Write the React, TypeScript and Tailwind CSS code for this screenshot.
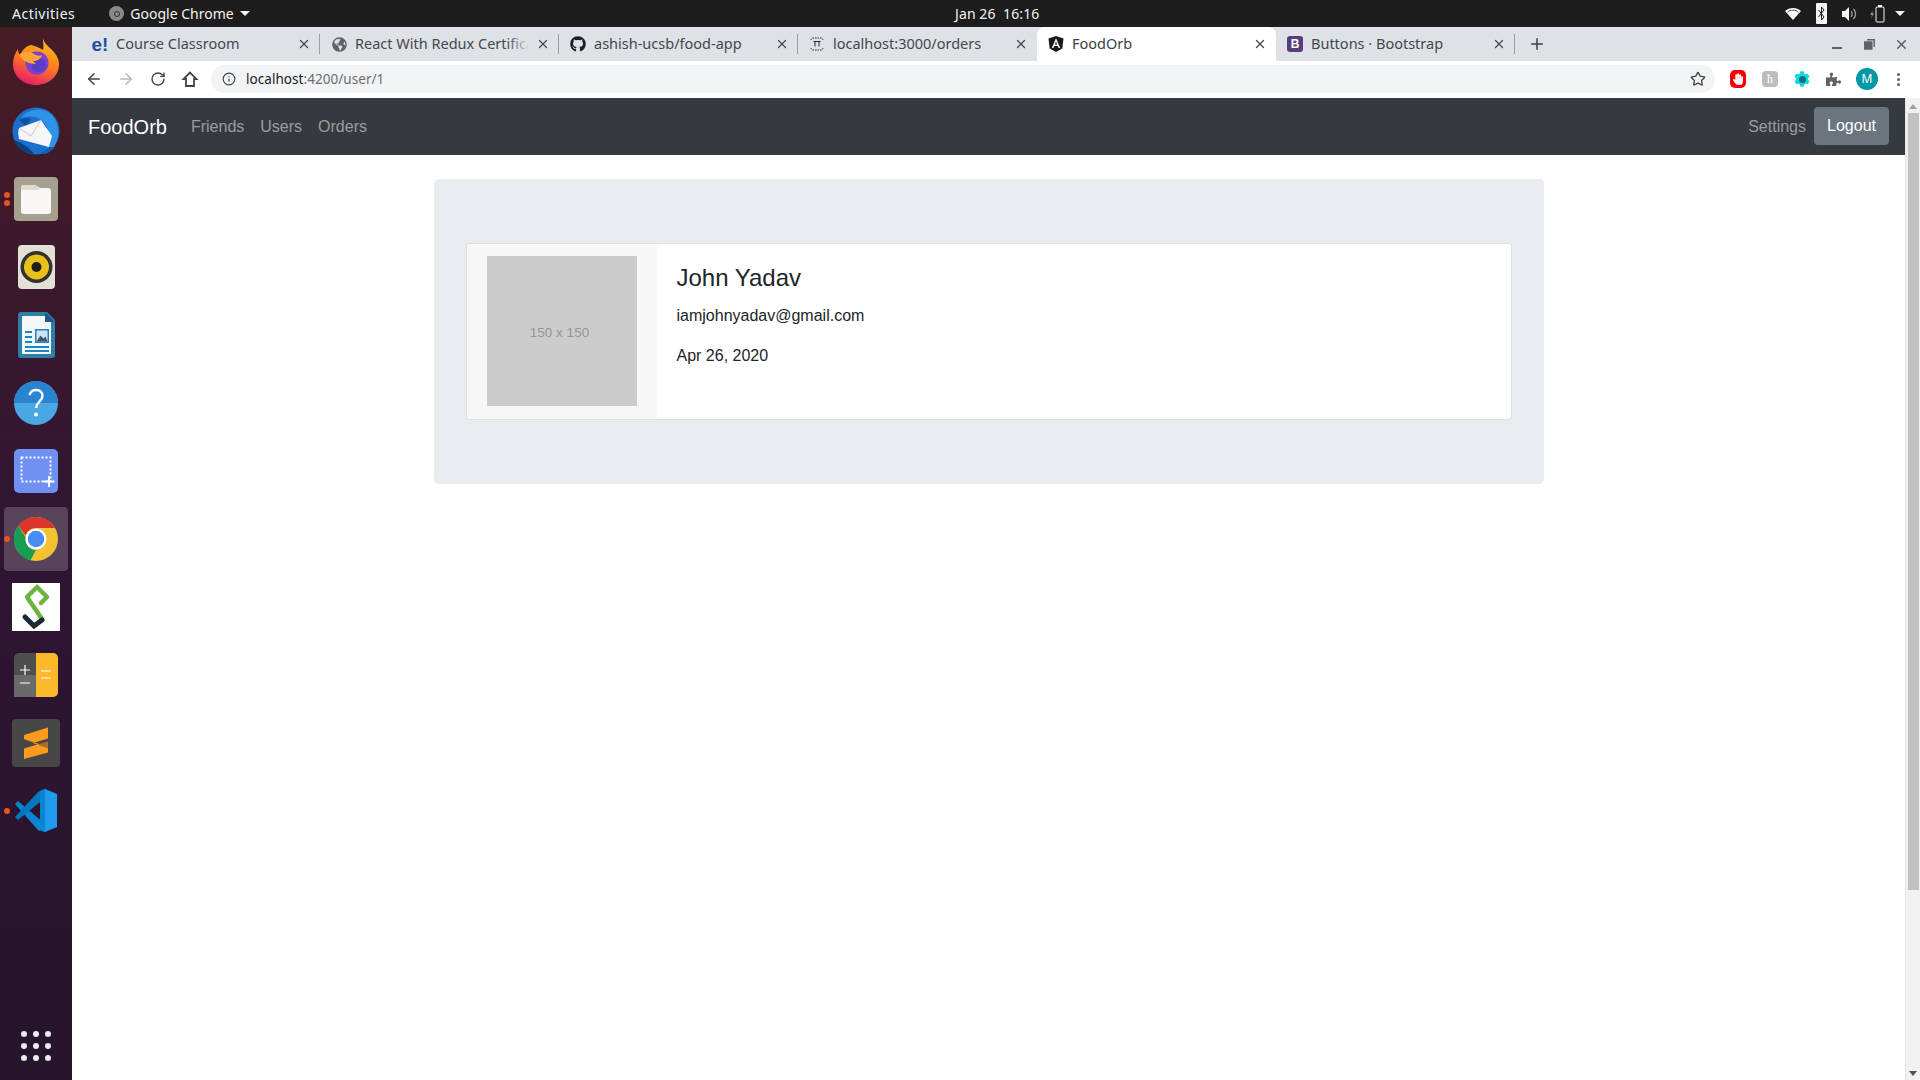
import React from "react";
import { FaGithub, FaPuzzlePiece, FaGlobeAmericas, FaHandPaper, FaCog } from "react-icons/fa";
import { ArrowLeft, ArrowRight, RotateCw, Info, Star, Plus, X } from "lucide-react";

const DESKTOP_FONT = "font-['Noto_Sans',sans-serif]";

// 독 아이콘들
const FirefoxIcon = () => (
  <svg className="-translate-y-0.5" width="48" height="48" viewBox="0 0 48 48">
    <defs>
      <linearGradient id="ffBody" x1="0.7" y1="0" x2="0.3" y2="1">
        <stop offset="0" stopColor="#ffc21f" />
        <stop offset="0.5" stopColor="#ff7a1f" />
        <stop offset="1" stopColor="#e8186c" />
      </linearGradient>
    </defs>
    <path d="M31 1c1 5 5 8 9 12 5 5 7 10 7 14 0 12-10 21-23 21S1 39 1 27c0-6 2-11 5-15 0 3 1 5 2 6 2-5 6-9 11-10 5 1 9 3 12 5 1-4 0-8 0-12z" fill="url(#ffBody)" />
    <circle cx="25" cy="26" r="11.5" fill="#7b3fd1" />
    <circle cx="27" cy="28" r="7" fill="#5b3cc4" />
    <path d="M7 18c4-4 10-4 15-1 3 2 6 2 8 1-1 4-5 6-9 6 2 2 3 3 3 3-7 0-13-3-17-9z" fill="#ffa436" />
  </svg>
);

const ThunderbirdIcon = () => (
  <svg width="50" height="50" viewBox="0 0 50 50">
    <circle cx="25" cy="25" r="23.5" fill="#1b6fcc" />
    <path d="M10 12C16 2 34 0 42 10c6 8 7 22 1 31-2 3-6 6-10 7 4-6 6-14 4-24-2-9-12-17-27-12z" fill="#2f93e8" />
    <path d="M8 14c4-2 8-3 12-1l-5 7z" fill="#0e4fa0" />
    <path d="M8 22l22-8 11 16-3 11-30-8c-1-4-1-8 0-11z" fill="#f6f6f8" />
    <path d="M8 22l12 8 10-16" fill="none" stroke="#b8bcc4" strokeWidth="0.8" />
    <path d="M3 34c6 2 14 6 20 14-10-1-17-6-20-14z" fill="#0d3f86" />
    <path d="M38 41c-3 3-6 5-9 7 6 0 11-2 15-7z" fill="#0e5fb0" />
  </svg>
);

const FilesIcon = () => (
  <svg width="44" height="44" viewBox="0 0 44 44">
    <rect width="44" height="44" rx="4" fill="#a5a08f" />
    <path d="M7 11a3 3 0 013-3h11l5 3h8a3 3 0 013 3v20a3 3 0 01-3 3H10a3 3 0 01-3-3z" fill="#f8f7f5" />
    <path d="M7 11a3 3 0 013-3h11l5 3-2 2H7z" fill="#dedbd0" />
  </svg>
);

const RhythmboxIcon = () => (
  <svg width="37" height="44" viewBox="0 0 37 44">
    <rect width="37" height="44" rx="4" fill="#e3e0d6" />
    <circle cx="18.5" cy="22" r="16" fill="#33322f" />
    <circle cx="18.5" cy="22" r="12.5" fill="#e8c21a" />
    <circle cx="18.5" cy="22" r="5" fill="#1d1d1b" />
  </svg>
);

const WriterIcon = () => (
  <svg width="37" height="46" viewBox="0 0 37 46">
    <path d="M3 0h26l8 8v35a3 3 0 01-3 3H3a3 3 0 01-3-3V3a3 3 0 013-3z" fill="#2b7fa8" />
    <path d="M4 4h23l6 6v32H4z" fill="#f4f6f7" />
    <path d="M27 0l10 10H27z" fill="#185a80" />
    <path d="M7 20h7M7 25h7M7 30h7M7 35h24M7 39h24" stroke="#1a87c2" strokeWidth="2" />
    <rect x="17" y="17" width="14" height="14" fill="#1a87c2" />
    <rect x="18.5" y="18.5" width="11" height="11" fill="#cfe4ee" />
    <path d="M18.5 29.5l4-6 3 3 2-2 2 5z" fill="#3d5566" />
  </svg>
);

const HelpIcon = () => (
  <svg width="44" height="44" viewBox="0 0 44 44">
    <circle cx="22" cy="22" r="22" fill="#4ba7e4" />
    <path d="M0 22a22 22 0 0144 0z" fill="#2a84d2" />
    <path d="M15.500 14c1-3 3.500-5 6.500-5 4 0 6.500 2.500 6.500 6 0 5.500-6.500 6-6.500 12" fill="none" stroke="#fff" strokeWidth="2.400" />
    <circle cx="22" cy="33.500" r="2" fill="#fff" />
  </svg>
);

const ScreenshotIcon = () => (
  <svg width="44" height="44" viewBox="0 0 44 44">
    <rect width="44" height="44" rx="5" fill="#6f8ff2" />
    <rect x="7.500" y="8.500" width="29" height="24" fill="none" stroke="#fff" strokeWidth="2" strokeDasharray="2 2" />
    <path d="M35 27v11M29.500 32.500h11" stroke="#fff" strokeWidth="2" />
  </svg>
);

const ChromeIcon = () => (
  <svg width="44" height="44" viewBox="0 0 48 48">
    <circle cx="24" cy="24" r="24" fill="#f2c230" />
    <path d="M24 0a24 24 0 0120.800 12H24a12 12 0 00-11.400 8.200L4.600 9.500A24 24 0 0124 0z" fill="#d9372c" />
    <path d="M4.600 9.500l8 12.500A12 12 0 0024 36l-6 11.300A24 24 0 014.600 9.500z" fill="#179e54" />
    <circle cx="24" cy="24" r="11.500" fill="#fff" />
    <circle cx="24" cy="24" r="9" fill="#4a8af4" />
  </svg>
);

const DeskLogoIcon = () => (
  <svg width="48" height="48" viewBox="0 0 48 48">
    <rect width="48" height="48" fill="#fff" />
    <path d="M30 36L15 14 25 4l10 10-6 6" fill="none" stroke="#6cb33f" strokeWidth="4.500" strokeLinejoin="round" strokeLinecap="round" />
    <path d="M13 34l9 9 8-6" fill="none" stroke="#1d2a36" strokeWidth="5" strokeLinecap="round" />
  </svg>
);

const CalcIcon = () => (
  <svg width="44" height="44" viewBox="0 0 44 44">
    <rect width="44" height="44" rx="5" fill="#4e4e4e" />
    <path d="M22 0h17a5 5 0 015 5v34a5 5 0 01-5 5H22z" fill="#fdb92c" />
    <rect y="22" width="22" height="22" fill="#6a6a6a" />
    <path d="M6 17h10M11 12v10M6 30h10M27 18h10M27 25h10" stroke="#fff" strokeWidth="1.200" />
  </svg>
);

const SublimeIcon = () => (
  <svg width="48" height="48" viewBox="0 0 48 48">
    <rect width="48" height="48" rx="4" fill="#474747" />
    <path d="M12 16l24-7.500v11L21 24l15 5v4.500L12 40V29.500L27 25l-15-5z" fill="#ff9a1f" />
    <path d="M12 20l15 5 9-2.500V29L21 24z" fill="#e8891c" opacity="0.6" />
  </svg>
);

const VscodeIcon = () => (
  <svg width="44" height="44" viewBox="0 0 44 44">
    <path d="M1 15l3-3 27 23-5 7-2-1z" fill="#0a85d1" />
    <path d="M1 28l3 3L31 9l-5-7-2 1z" fill="#0077bf" />
    <path d="M31 0l12 5v33l-12 5-5-2V2z" fill="#1f9cf0" />
    <path d="M31 0l-5 2v39l5 2z" fill="#0a85d1" />
  </svg>
);

const DOCK_ITEMS = [
  { id: "firefox", icon: <FirefoxIcon /> },
  { id: "thunderbird", icon: <ThunderbirdIcon /> },
  { id: "files", icon: <FilesIcon />, dots: 2 },
  { id: "rhythmbox", icon: <RhythmboxIcon /> },
  { id: "writer", icon: <WriterIcon /> },
  { id: "help", icon: <HelpIcon /> },
  { id: "screenshot", icon: <ScreenshotIcon /> },
  { id: "chrome", icon: <ChromeIcon />, dots: 1, active: true },
  { id: "logo", icon: <DeskLogoIcon /> },
  { id: "calc", icon: <CalcIcon /> },
  { id: "sublime", icon: <SublimeIcon /> },
  { id: "vscode", icon: <VscodeIcon />, dots: 1 },
];

const Dock: React.FC = () => (
  <aside className="w-[72px] shrink-0 flex flex-col pt-[2px] bg-gradient-to-b from-[#471c24] via-[#2f1533] to-[#26152c]">
    {DOCK_ITEMS.map((item) => (
      <div key={item.id} className="relative h-[68px] flex items-center justify-center">
        {item.active && <div className="absolute left-1 top-0.5 w-16 h-16 rounded bg-white/20" />}
        {item.dots && (
          <div className="absolute left-1 top-0 h-full flex flex-col justify-center gap-0.5">
            {item.dots === 2 && <span className="w-1.5 h-1.5 rounded-full bg-[#e95420]" />}
            <span className="w-1.5 h-1.5 rounded-full bg-[#e95420]" />
          </div>
        )}
        <div className="relative">{item.icon}</div>
      </div>
    ))}
    <div className="mt-auto mb-[19px] mx-auto grid grid-cols-3 gap-1.5">
      {Array.from({ length: 9 }).map((_, i) => (
        <span key={i} className="w-1.5 h-1.5 rounded-sm bg-[#eeeeee]" />
      ))}
    </div>
  </aside>
);

const TopBar: React.FC = () => (
  <header className={`h-[27px] shrink-0 bg-[#1d1d1d] text-[#f2f2f2] text-[14px] flex items-center ${DESKTOP_FONT}`}>
    <div className="w-[955px] flex items-center">
      <span className="ml-3 tracking-[0.5px]">Activities</span>
      <span className="ml-[34px] w-[15px] h-[15px] rounded-full bg-[#8a8a8a] flex items-center justify-center">
        <span className="w-1.5 h-1.5 rounded-full border border-[#333]" />
      </span>
      <span className="ml-1.5">Google Chrome</span>
      <span className="ml-1.5 border-x-[5px] border-x-transparent border-t-[5px] border-t-[#f2f2f2]" />
    </div>
    <span className="tracking-[0.1px]">Jan 26&nbsp; 16:16</span>
    <div className="ml-auto flex items-center pr-[15px]">
      <svg width="16" height="12" viewBox="0 0 16 12">
        <path d="M0 3c4.500-4 11.500-4 16 0l-8 9z" fill="#fff" />
        <path d="M2.500 4c3.200-2.500 7.800-2.500 11 0" stroke="#1d1d1d" fill="none" strokeWidth="0.800" />
      </svg>
      <svg className="ml-[15px]" width="11" height="21" viewBox="0 0 11 21">
        <rect width="11" height="21" rx="1" fill="#f5f5f5" />
        <path d="M2.500 7l5.500 7-2.500 3V4L8 7l-5.500 7" fill="none" stroke="#1d1d1d" strokeWidth="1" />
      </svg>
      <svg className="ml-[15px]" width="15" height="14" viewBox="0 0 15 14">
        <path d="M0 4h3l4-4v14l-4-4H0z" fill="#f5f5f5" />
        <path d="M9 4c1.500 2 1.500 4 0 6M11.500 2c2.500 3 2.500 7 0 10" stroke="#a8a8a8" fill="none" strokeWidth="1.200" />
      </svg>
      <svg className="ml-[13px]" width="15" height="18" viewBox="0 0 15 18">
        <path d="M3 5L0 10h2l-1 4 3-6H2z" fill="#8a8a8a" />
        <rect x="6" y="2" width="8" height="15" rx="1" fill="none" stroke="#f5f5f5" />
        <rect x="8" y="0" width="4" height="2" fill="#f5f5f5" />
      </svg>
      <span className="ml-[10px] border-x-[5px] border-x-transparent border-t-[5px] border-t-[#f2f2f2]" />
    </div>
  </header>
);

const LocalhostFavicon = () => (
  <svg width="16" height="16" viewBox="0 0 16 16" fill="none" stroke="#2b2b2b" strokeWidth="1">
    <path d="M2 4c0-1 1-2 2-2h8c1 0 2 1 2 2M2 12c0 1 1 2 2 2h8c1 0 2-1 2-2" strokeDasharray="1.500 1" />
    <path d="M6 5.500v5M10 5.500v5M4.500 5.500h7" />
  </svg>
);

const AngularFavicon = () => (
  <svg width="16" height="16" viewBox="0 0 16 16">
    <path d="M8 0l7.500 2.600-1.200 9.800L8 16l-6.300-3.600L.5 2.600z" fill="#1a1a1a" />
    <path d="M8 2.300L3.800 12h1.600l.8-2.100h3.600l.8 2.100h1.600zM6.800 8.600L8 5.600l1.200 3z" fill="#fff" />
  </svg>
);

const TABS = [
  {
    title: "Course Classroom",
    icon: <span className="text-[19px] leading-none whitespace-nowrap font-bold text-[#24509b] font-['Liberation_Sans',sans-serif]">e!</span>,
  },
  { title: "React With Redux Certification", icon: <FaGlobeAmericas className="w-[15px] h-[15px] text-[#5f6368]" /> },
  { title: "ashish-ucsb/food-app", icon: <FaGithub className="w-4 h-4 text-[#1b1f23]" /> },
  { title: "localhost:3000/orders", icon: <LocalhostFavicon />, noSeparator: true },
  { title: "FoodOrb", icon: <AngularFavicon />, active: true, noSeparator: true },
  {
    title: "Buttons · Bootstrap",
    icon: (
      <span className="w-4 h-4 rounded-[3px] bg-[#563d7c] text-white text-[12px] leading-4 text-center font-bold font-['Liberation_Sans',sans-serif]">
        B
      </span>
    ),
  },
];

const TabStrip: React.FC = () => (
  <div className={`h-[34px] shrink-0 bg-[#dee1e6] flex pl-[9px] text-[14.5px] ${DESKTOP_FONT}`}>
    {TABS.map((tab) => (
      <div
        key={tab.title}
        className={`relative w-[239px] shrink-0 flex items-center pl-[11px] pr-[9px] ${
          tab.active ? "bg-white rounded-t-lg text-[#3c4043]" : "text-[#45484d]"
        }`}
      >
        <span className="w-4 h-4 shrink-0 flex items-center justify-center">{tab.icon}</span>
        <span className="ml-2 flex-1 min-w-0 whitespace-nowrap overflow-hidden">{tab.title}</span>
        {tab.title.startsWith("React") && (
          <span className="absolute right-[29px] top-0 h-full w-6 bg-gradient-to-l from-[#dee1e6] to-transparent" />
        )}
        <X className="ml-2 w-3.5 h-3.5 shrink-0 text-[#45484d]" strokeWidth={2.25} />
        {!tab.noSeparator && !tab.active && <span className="absolute right-0 top-[7px] h-5 w-px bg-[#9aa0a6]" />}
      </div>
    ))}
    <Plus className="ml-[13px] mt-[8px] w-[18px] h-[18px] text-[#3c4043]" strokeWidth={2} />
    <div className="ml-auto flex items-center pr-[11px]">
      <span className="w-[10px] h-0.5 mt-[7px] bg-[#5f6368]" />
      <svg className="ml-[22px]" width="11" height="11" viewBox="0 0 11 11" fill="none" stroke="#5f6368" strokeWidth="1.500">
        <rect x="0.800" y="3" width="7" height="7" fill="#5f6368" />
        <path d="M3 .8h7.200V8" />
      </svg>
      <X className="ml-[19px] w-[15px] h-[15px] text-[#5f6368]" strokeWidth={2.5} />
    </div>
  </div>
);

const Toolbar: React.FC = () => (
  <div className="h-[37px] shrink-0 bg-white flex items-center pb-px text-[#5f6368]">
    <ArrowLeft className="ml-[13px] w-[18px] h-[18px] text-[#444]" strokeWidth={2} />
    <ArrowRight className="ml-[14px] w-[18px] h-[18px] text-[#b6b8bb]" strokeWidth={2} />
    <RotateCw className="ml-[15px] w-4 h-4 text-[#444]" strokeWidth={2} />
    <svg className="ml-[15px]" width="18" height="18" viewBox="0 0 18 18" fill="none" stroke="#444" strokeWidth="1.800">
      <path d="M9 2.500L2.500 9H5v7h8V9h2.500z" strokeLinejoin="miter" />
    </svg>
    <div className={`ml-[12px] h-7 w-[1504px] rounded-full bg-[#f1f3f4] flex items-center pl-[11px] pr-[9px] text-[13.5px] ${DESKTOP_FONT}`}>
      <Info className="w-3.5 h-3.5 text-[#444]" strokeWidth={2} />
      <span className="ml-[10px] tracking-[0.05px] text-[#202124]">
        localhost<span className="text-[#6a6e73]">:4200/user/1</span>
      </span>
      <Star className="ml-auto w-4 h-4 text-[#444]" strokeWidth={2} />
    </div>
    <span className="ml-[15px] w-4 h-[18px] flex items-center justify-center bg-[#f40000] rounded-[5px]">
      <FaHandPaper className="w-[10px] h-[12px] text-white" />
    </span>
    <span className="ml-4 w-4 h-4 bg-[#bdbdbd] rounded-sm flex items-center justify-center text-white text-[12px] leading-none font-['Liberation_Serif',serif]">
      ћ
    </span>
    <span className="ml-4 relative w-4 h-4 flex items-center justify-center">
      <FaCog className="w-4 h-4 text-[#14d8e0]" />
      <span className="absolute w-[7px] h-[7px] rounded-full bg-[#0f6f80]" />
    </span>
    <FaPuzzlePiece className="ml-4 w-[15px] h-[15px] text-[#5f6368]" />
    <span className={`ml-[15px] w-[22px] h-[22px] rounded-full bg-[#0097a7] text-white text-[12px] flex items-center justify-center ${DESKTOP_FONT}`}>
      M
    </span>
    <span className="ml-[19px] flex flex-col gap-[2px]">
      <span className="w-[3px] h-[3px] rounded-full bg-[#5f6368]" />
      <span className="w-[3px] h-[3px] rounded-full bg-[#5f6368]" />
      <span className="w-[3px] h-[3px] rounded-full bg-[#5f6368]" />
    </span>
  </div>
);

const Navbar: React.FC = () => (
  <nav className="h-[57px] shrink-0 bg-[#343a40] flex items-center pl-4 pr-4 text-[16px]">
    <a className="text-[20px] text-white">FoodOrb</a>
    <div className="ml-4 flex text-white/50">
      <a className="px-2">Friends</a>
      <a className="px-2">Users</a>
      <a className="px-2">Orders</a>
    </div>
    <div className="ml-auto flex items-center text-white/50">
      <a className="px-2">Settings</a>
      <button className="h-[38px] w-[75px] mb-[2px] rounded bg-[#6c757d] text-white">Logout</button>
    </div>
  </nav>
);

const ProfileCard: React.FC = () => (
  <div className="flex h-[177px] rounded border border-black/[.125] bg-white overflow-hidden">
    <div className="w-[190px] shrink-0 bg-[#f7f7f7] pl-5 pt-3">
      <div className="w-[150px] h-[150px] bg-[#cccccc] flex items-center justify-center pr-1 pt-[5px] text-[13.5px] text-[#969696]">
        150 x 150
      </div>
    </div>
    <div className="flex-1 p-5 text-[#212529]">
      <h4 className="text-[24px] leading-[1.2] mb-[11px]">John Yadav</h4>
      <p className="mb-4 leading-6">iamjohnyadav@gmail.com</p>
      <p className="leading-6">Apr 26, 2020</p>
    </div>
  </div>
);

const Scrollbar: React.FC = () => (
  <div className="w-[15px] shrink-0 bg-[#f1f1f1] border-l border-[#e4e4e4] flex flex-col items-center">
    <span className="mt-[6px] border-x-[4px] border-x-transparent border-b-[5px] border-b-[#a3a3a3]" />
    <div className="mt-[4px] w-[11px] h-[777px] bg-[#c1c1c1]" />
    <span className="mt-auto mb-[4px] border-x-[4px] border-x-transparent border-t-[5px] border-t-[#505050]" />
  </div>
);

const App: React.FC = () => {
  return (
    <div className="w-[1920px] h-[1080px] overflow-hidden flex flex-col bg-white font-['Liberation_Sans',Arial,sans-serif]">
      <TopBar />
      <div className="flex-1 min-h-0 flex">
        <Dock />
        <div className="flex-1 min-w-0 flex flex-col">
          <TabStrip />
          <Toolbar />
          <div className="flex-1 min-h-0 flex">
            <main className="flex-1 min-w-0 flex flex-col">
              <Navbar />
              <div className="w-[1110px] mx-auto mt-6 rounded-[5px] bg-[#e9ecef] pt-16 pb-16 px-8">
                <ProfileCard />
              </div>
            </main>
            <Scrollbar />
          </div>
        </div>
      </div>
    </div>
  );
};

export default App;
